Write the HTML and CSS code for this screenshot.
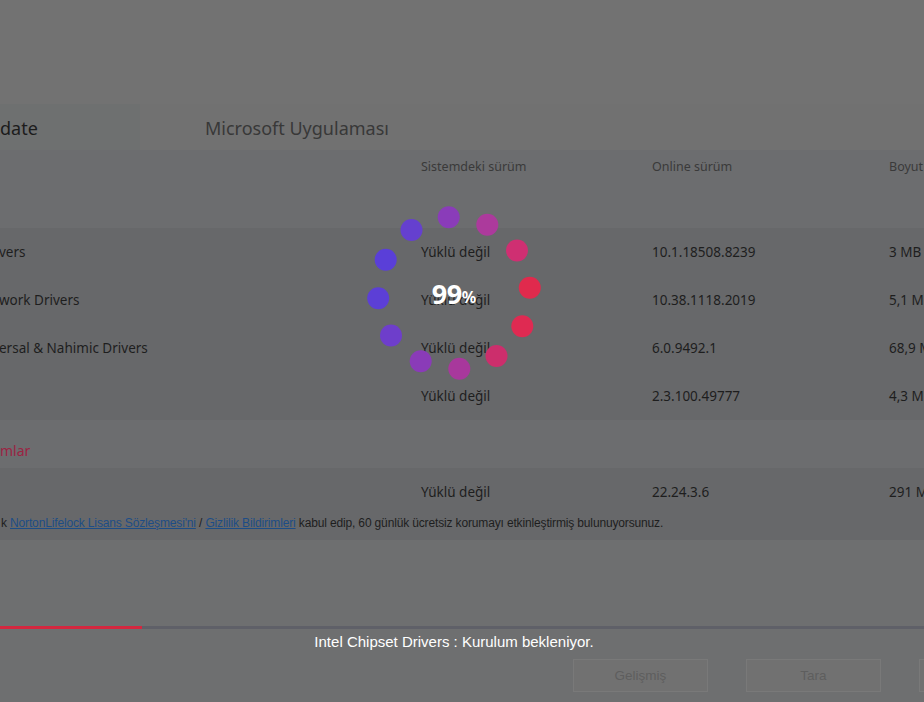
FILE: index.html
```html
<!DOCTYPE html>
<html lang="tr">
<head>
<meta charset="utf-8">
<title>Sürücü Güncelleme</title>
<link rel="stylesheet" href="styles.css">
</head>
<body>
<div class="app">
  <div class="top"></div>
  <div class="tabs">
    <div class="tab tab-active">date</div>
    <div class="tab tab-other">Microsoft Uygulaması</div>
  </div>
  <div class="table">
    <div class="row head">
      <div></div><div>Sistemdeki sürüm</div><div>Online sürüm</div><div>Boyut</div>
    </div>
    <div class="row cat"></div>
    <div class="group">
      <div class="row item"><div class="cut">vers</div><div>Yüklü değil</div><div>10.1.18508.8239</div><div>3 MB</div></div>
      <div class="row item"><div class="cut">work Drivers</div><div>Yüklü değil</div><div>10.38.1118.2019</div><div>5,1 MB</div></div>
      <div class="row item"><div class="cut">ersal &amp; Nahimic Drivers</div><div>Yüklü değil</div><div>6.0.9492.1</div><div>68,9 MB</div></div>
      <div class="row item"><div></div><div>Yüklü değil</div><div>2.3.100.49777</div><div>4,3 MB</div></div>
    </div>
    <div class="row cat cat-second"><div class="cat-title">mlar</div></div>
    <div class="group">
      <div class="row item"><div></div><div>Yüklü değil</div><div>22.24.3.6</div><div>291 MB</div></div>
      <div class="note">k <a href="#">NortonLifelock Lisans Sözleşmesi'ni</a> / <a href="#">Gizlilik Bildirimleri</a> kabul edip, 60 günlük ücretsiz korumayı etkinleştirmiş bulunuyorsunuz.</div>
    </div>
  </div>
  <div class="spacer"></div>
  <div class="progress"><div class="progress-fill"></div></div>
  <div class="status">Intel Chipset Drivers : Kurulum bekleniyor.</div>
  <div class="buttons">
    <button class="btn">Gelişmiş</button>
    <button class="btn">Tara</button>
    <button class="btn"></button>
  </div>
</div>

<div class="spinner">
  <svg width="180" height="180" viewBox="0 0 180 180">
    <circle cx="84.7" cy="14.2" r="11" fill="#8a3cb9"/>
    <circle cx="123.3" cy="21.7" r="11" fill="#ac3a9c"/>
    <circle cx="153" cy="47.5" r="11" fill="#cf2f72"/>
    <circle cx="165.8" cy="84.7" r="11" fill="#e02a4d"/>
    <circle cx="158.3" cy="123.3" r="11" fill="#df2a52"/>
    <circle cx="132.5" cy="153" r="11" fill="#cc2e6c"/>
    <circle cx="95.3" cy="165.8" r="11" fill="#a8389c"/>
    <circle cx="56.7" cy="158.3" r="11" fill="#8a3bb8"/>
    <circle cx="27" cy="132.5" r="11" fill="#6e3ecb"/>
    <circle cx="14.2" cy="95.3" r="11" fill="#5c3fd6"/>
    <circle cx="21.7" cy="56.7" r="11" fill="#5a3fd8"/>
    <circle cx="47.5" cy="27" r="11" fill="#6540cf"/>
  </svg>
  <div class="pct"><span class="num">99</span><span class="sign">%</span></div>
</div>
</body>
</html>
```
FILE: styles.css
```css
* { box-sizing: border-box; }
html, body {
  margin: 0;
  padding: 0;
  width: 924px;
  height: 702px;
  overflow: hidden;
  background: #727272;
  font-family: "Noto Sans", "Open Sans", sans-serif;
}
.app {
  display: flex;
  flex-direction: column;
  height: 702px;
}
.top { height: 104px; flex: none; }
.tabs {
  display: flex;
  height: 46px;
  flex: none;
}
.tab {
  display: flex;
  align-items: center;
  font-size: 18px;
  padding-top: 2px;
}
.tab-active {
  width: 140px;
  background: #6e7070;
  color: #1c1c1c;
}
.tab-other {
  flex: 1;
  background: #717171;
  color: #383838;
  padding-left: 65px;
}
.table {
  background: #6c6d6f;
  display: flex;
  flex-direction: column;
}
.row {
  display: grid;
  grid-template-columns: 421px 231px 237px 1fr;
  align-items: center;
  white-space: nowrap;
  overflow: hidden;
}
.head {
  height: 35px;
  font-size: 12.5px;
  color: #3a3a3a;
  padding-bottom: 3px;
}
.cat { height: 43px; }
.group { background: #67686a; }
.item {
  height: 48px;
  font-size: 13.5px;
  color: #1e1e1e;
}
.cut { margin-left: -1px; }
.cat-second {
  height: 48px;
  padding-top: 12px;
}
.cat-title {
  color: #9c2343;
  font-size: 14px;
}
.note {
  height: 24px;
  font-family: "Liberation Sans Narrow", "Liberation Sans", sans-serif;
  font-size: 12px;
  color: #1e1e1e;
  white-space: nowrap;
  padding-left: 1px;
  letter-spacing: -0.15px;
}
.note a { color: #1d4d86; }
.spacer {
  flex: 1;
  background: #6e6f70;
}
.progress {
  height: 3px;
  background: #5f6068;
  flex: none;
}
.progress-fill {
  width: 142px;
  height: 3px;
  background: #d4273f;
}
.status {
  flex: none;
  background: #6e6f70;
  color: #ffffff;
  text-align: center;
  padding-right: 16px;
  font-family: "Liberation Sans Narrow", "Liberation Sans", sans-serif;
  font-size: 15px;
  height: 30px;
  line-height: 26px;
}
.buttons {
  flex: none;
  background: #6e6f70;
  display: flex;
  gap: 38px;
  padding-left: 573px;
  height: 43px;
}
.btn {
  width: 135px;
  height: 33px;
  flex: none;
  border: 1px solid #797979;
  background: #717171;
  color: #5e5e5e;
  font-family: "Liberation Sans Narrow", "Liberation Sans", sans-serif;
  font-size: 13.5px;
  padding: 0;
}
.spinner {
  position: absolute;
  left: 364px;
  top: 203px;
  width: 180px;
  height: 180px;
}
.spinner svg { display: block; }
.pct {
  position: absolute;
  left: 0;
  top: 0;
  width: 180px;
  height: 180px;
  display: flex;
  align-items: center;
  justify-content: center;
  color: #ffffff;
  font-weight: 700;
  font-family: "Noto Sans", "Open Sans", sans-serif;
}
.num { font-size: 27px; letter-spacing: -0.5px; }
.sign { font-size: 16px; padding-top: 7px; }
```
